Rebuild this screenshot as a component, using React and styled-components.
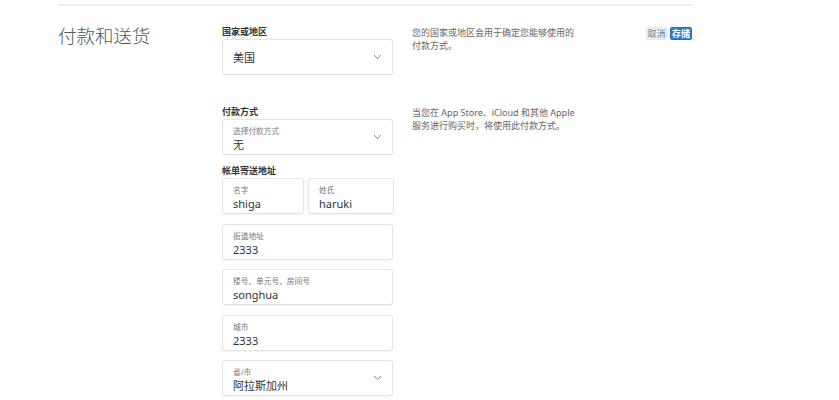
import React from 'react';
import styled, { createGlobalStyle } from 'styled-components';

const GlobalStyle = createGlobalStyle`
  body {
    margin: 0;
    background: #fff;
    font-family: "Noto Sans", "Noto Sans CJK SC", sans-serif;
    color: #333;
  }
`;

const Page = styled.div`
  width: 839px;
  height: 400px;
  overflow: hidden;
  padding: 4px 0 0 58px;
  box-sizing: border-box;
`;

const TopRule = styled.div`
  width: 634px;
  height: 2px;
  background: #ededed;
`;

const Layout = styled.div`
  display: grid;
  grid-template-columns: 164px 171px 234px 65px;
  padding-top: 17px;
`;

const Title = styled.h1`
  margin: 0;
  font-size: 18.5px;
  font-weight: 300;
  color: #555;
  line-height: 25px;
`;

const Column = styled.div`
  display: flex;
  flex-direction: column;
`;

const Label = styled.div`
  font-size: 9px;
  font-weight: 700;
  color: #333;
  line-height: 14px;
  margin-top: ${p => p.$top || 0}px;
  height: 14px;
`;

const Field = styled.div`
  position: relative;
  display: flex;
  flex-direction: column;
  justify-content: ${p => (p.$hint ? 'flex-start' : 'center')};
  height: 36px;
  box-sizing: border-box;
  padding: ${p => (p.$hint ? '5px 10px 0' : '0 10px')};
  border: 1px solid #e4e4e4;
  border-radius: 3px;
  box-shadow: 0 1px 2px rgba(0, 0, 0, 0.05);
  background: #fff;
  margin-top: ${p => p.$top || 0}px;
`;

const Hint = styled.span`
  font-size: 7.7px;
  color: #777;
  line-height: 12px;
`;

const Value = styled.span`
  font-size: 11px;
  color: #333;
  line-height: 15px;
`;

const Chevron = styled.svg`
  position: absolute;
  right: 10px;
  top: 50%;
  margin-top: -3px;
  width: 9px;
  height: 6px;
`;

const Pair = styled.div`
  display: grid;
  grid-template-columns: 82px 86px;
  column-gap: 4px;
`;

const Note = styled.p`
  margin: 0 0 0 19px;
  font-size: 9px;
  line-height: 13px;
  color: #666;
  width: 170px;
  margin-top: ${p => p.$top || 0}px;
`;

const Actions = styled.div`
  display: flex;
  justify-content: flex-end;
  gap: 3px;
  align-items: flex-start;
  padding-top: 4px;
`;

const Btn = styled.button`
  font-family: inherit;
  font-size: 9px;
  line-height: 11px;
  padding: 0;
  width: ${p => (p.$primary ? 22 : 21)}px;
  height: 13px;
  border-radius: 2px;
  border: 1px solid ${p => (p.$primary ? '#1f6fbf' : '#e3e7ea')};
  background: ${p => (p.$primary ? '#2b7fd2' : '#eef2f4')};
  color: ${p => (p.$primary ? '#fff' : '#5b7d99')};
  font-weight: ${p => (p.$primary ? 700 : 400)};
`;

const Arrow = () => (
  <Chevron viewBox="0 0 9 6">
    <path d="M1 1l3.5 3.5L8 1" fill="none" stroke="#888" strokeWidth="1" />
  </Chevron>
);

const Input = ({ hint, value, select, top }) => (
  <Field $hint={!!hint} $top={top}>
    {hint && <Hint>{hint}</Hint>}
    <Value>{value}</Value>
    {select && <Arrow />}
  </Field>
);

export default function App() {
  return (
    <Page>
      <GlobalStyle />
      <TopRule />
      <Layout>
        <Title>付款和送货</Title>
        <Column>
          <Label $top={2}>国家或地区</Label>
          <Input value="美国" select />
          <Label $top={30}>付款方式</Label>
          <Input hint="选择付款方式" value="无" select />
          <Label $top={9}>帐单寄送地址</Label>
          <Pair>
            <Input hint="名字" value="shiga" />
            <Input hint="姓氏" value="haruki" />
          </Pair>
          <Input hint="街道地址" value="2333" top={10} />
          <Input hint="楼号、单元号、房间号" value="songhua" top={9} />
          <Input hint="城市" value="2333" top={10} />
          <Input hint="省/市" value="阿拉斯加州" select top={9} />
        </Column>
        <Column>
          <Note $top={3}>您的国家或地区会用于确定您能够使用的付款方式。</Note>
          <Note $top={54}>当您在 App Store、iCloud 和其他 Apple 服务进行购买时，将使用此付款方式。</Note>
        </Column>
        <Actions>
          <Btn>取消</Btn>
          <Btn $primary>存储</Btn>
        </Actions>
      </Layout>
    </Page>
  );
}
